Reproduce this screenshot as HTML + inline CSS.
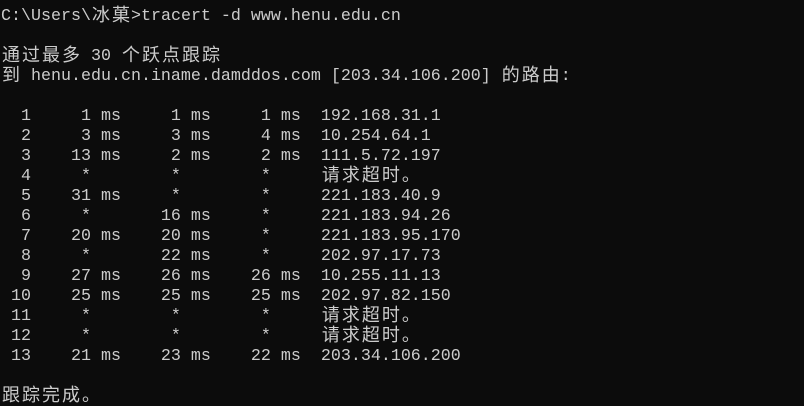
<!DOCTYPE html>
<html><head><meta charset="utf-8"><style>
html,body{margin:0;padding:0;background:#0c0c0c;width:804px;height:406px;overflow:hidden}
.w{padding:7px 0 0 1px;color:#cccccc;font-family:"Liberation Mono",monospace;font-size:16.67px}
.w div{height:20px;line-height:20px;white-space:pre;display:flex;align-items:flex-start}
.c{display:block;flex:none;width:20px;height:20px;text-align:center;font-family:"Noto Sans CJK SC",sans-serif;font-size:18px;line-height:20px;position:relative;top:-3px}
</style></head><body><div class="w"><div>C:\Users\<span class="c">冰</span><span class="c">菓</span>&gt;tracert -d www.henu.edu.cn</div><div></div><div><span class="c">通</span><span class="c">过</span><span class="c">最</span><span class="c">多</span> 30 <span class="c">个</span><span class="c">跃</span><span class="c">点</span><span class="c">跟</span><span class="c">踪</span></div><div><span class="c">到</span> henu.edu.cn.iname.damddos.com [203.34.106.200] <span class="c">的</span><span class="c">路</span><span class="c">由</span>:</div><div></div><div>  1     1 ms     1 ms     1 ms  192.168.31.1</div><div>  2     3 ms     3 ms     4 ms  10.254.64.1</div><div>  3    13 ms     2 ms     2 ms  111.5.72.197</div><div>  4     *        *        *     <span class="c">请</span><span class="c">求</span><span class="c">超</span><span class="c">时</span><span class="c">。</span></div><div>  5    31 ms     *        *     221.183.40.9</div><div>  6     *       16 ms     *     221.183.94.26</div><div>  7    20 ms    20 ms     *     221.183.95.170</div><div>  8     *       22 ms     *     202.97.17.73</div><div>  9    27 ms    26 ms    26 ms  10.255.11.13</div><div> 10    25 ms    25 ms    25 ms  202.97.82.150</div><div> 11     *        *        *     <span class="c">请</span><span class="c">求</span><span class="c">超</span><span class="c">时</span><span class="c">。</span></div><div> 12     *        *        *     <span class="c">请</span><span class="c">求</span><span class="c">超</span><span class="c">时</span><span class="c">。</span></div><div> 13    21 ms    23 ms    22 ms  203.34.106.200</div><div></div><div><span class="c">跟</span><span class="c">踪</span><span class="c">完</span><span class="c">成</span><span class="c">。</span></div></div></body></html>
